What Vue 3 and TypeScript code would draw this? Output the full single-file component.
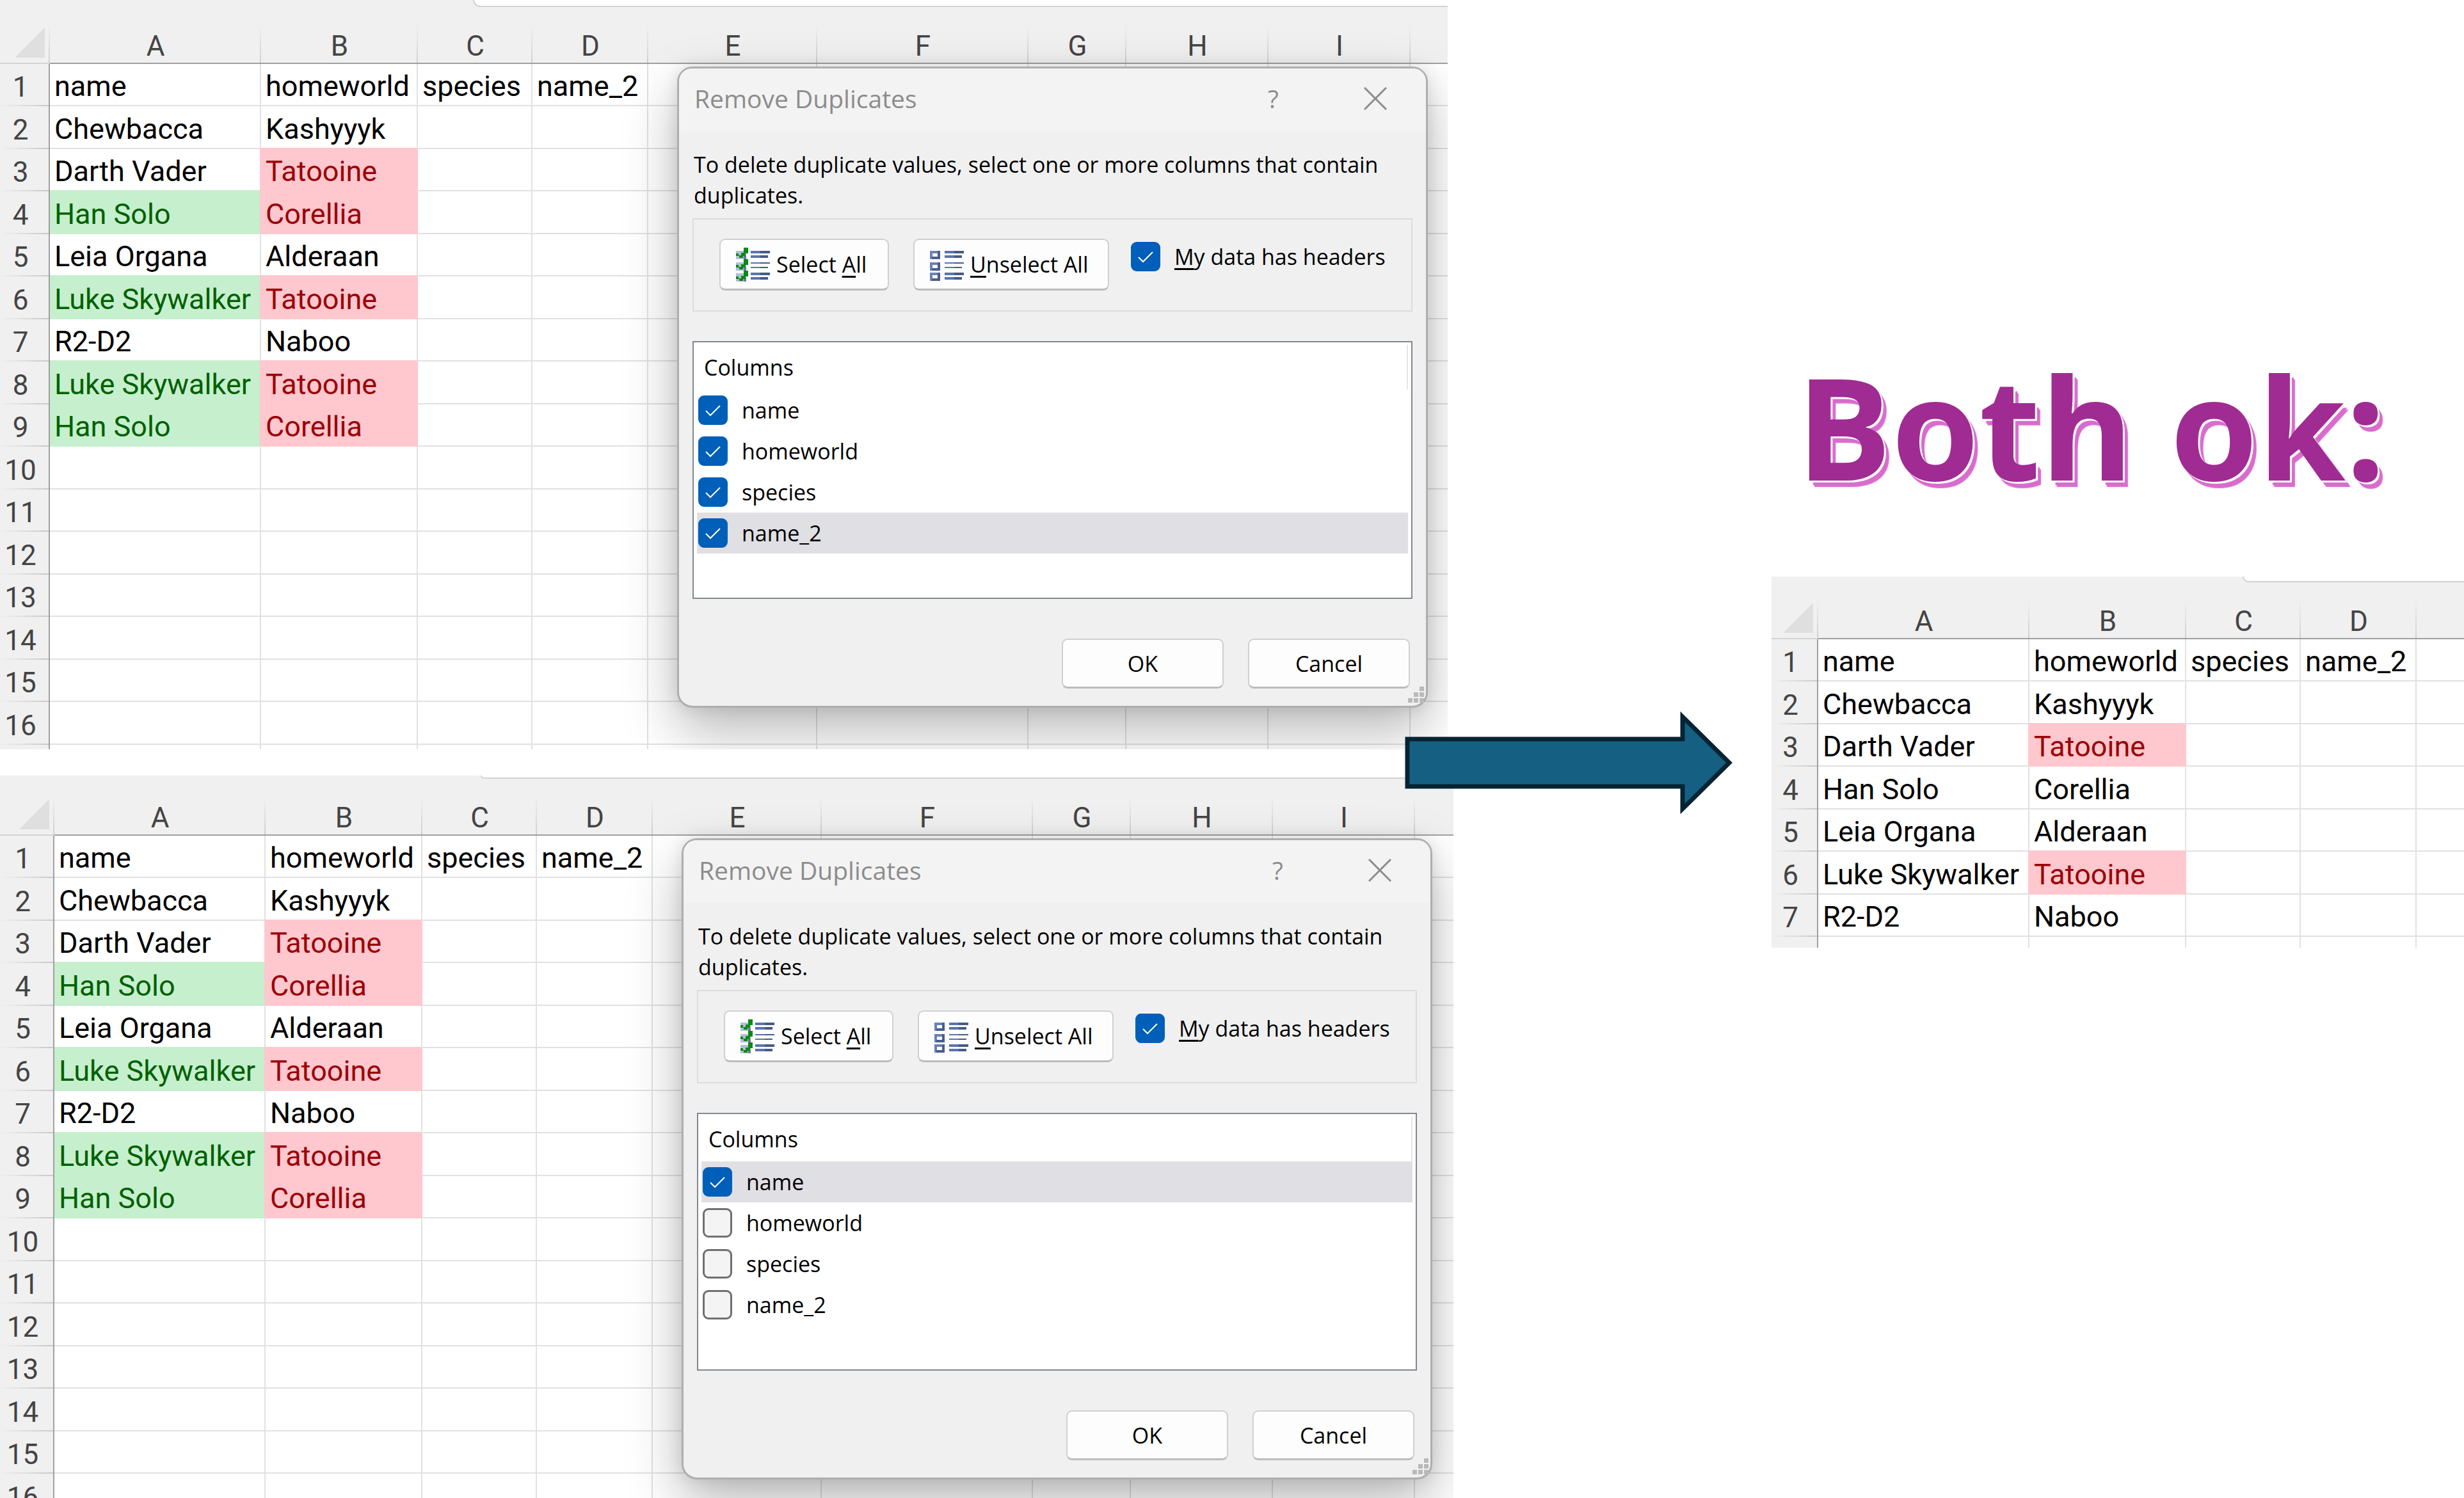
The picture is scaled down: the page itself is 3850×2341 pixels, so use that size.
<script setup lang="ts">
import { reactive } from 'vue'

type Tone = 'plain' | 'green' | 'red'
interface Cell { text: string; tone: Tone }
interface Choice { label: string; checked: boolean; active: boolean }
interface Sheet {
  id: string
  gutter: number
  barTop: number
  barLeft: number
  cutRow: number
  letters: string[]
  widths: number[]
  rows: Cell[][]
  choices: Choice[]
  headers: boolean
}

const tones: Record<string, Tone> = { g: 'green', r: 'red' }

function row(source: string): Cell[] {
  return source.split('|').map((part) => {
    const [text, mark] = part.split('~')
    return { text, tone: tones[mark] ?? 'plain' }
  })
}

function build(lines: string[], rowCount: number, colCount: number): Cell[][] {
  return Array.from({ length: rowCount }, (_, r) => {
    const cells = lines[r] ? row(lines[r]) : []
    while (cells.length < colCount) cells.push({ text: '', tone: 'plain' })
    return cells
  })
}

function choices(checked: boolean[], active: number): Choice[] {
  return ['name', 'homeworld', 'species', 'name_2'].map((label, i) => ({
    label,
    checked: checked[i],
    active: i === active,
  }))
}

const before = [
  'name|homeworld|species|name_2',
  'Chewbacca|Kashyyyk',
  'Darth Vader|Tatooine~r',
  'Han Solo~g|Corellia~r',
  'Leia Organa|Alderaan',
  'Luke Skywalker~g|Tatooine~r',
  'R2-D2|Naboo',
  'Luke Skywalker~g|Tatooine~r',
  'Han Solo~g|Corellia~r',
]
const after = [
  'name|homeworld|species|name_2',
  'Chewbacca|Kashyyyk',
  'Darth Vader|Tatooine~r',
  'Han Solo|Corellia',
  'Leia Organa|Alderaan',
  'Luke Skywalker|Tatooine~r',
  'R2-D2|Naboo',
]
const wide = ['A', 'B', 'C', 'D', 'E', 'F', 'G', 'H', 'I', '']
const wideWidths = [330, 245, 179, 181, 264, 330, 153, 222, 222]

const sheets = reactive<Sheet[]>([
  {
    id: 'all', gutter: 78, barTop: 11, barLeft: 739, cutRow: 7, letters: wide, widths: wideWidths,
    rows: build(before, 16, 10), choices: choices([true, true, true, true], 3), headers: true,
  },
  {
    id: 'one', gutter: 85, barTop: 5, barLeft: 751, cutRow: 0, letters: wide, widths: wideWidths,
    rows: build(before, 16, 10), choices: choices([true, false, false, false], 0), headers: true,
  },
  {
    id: 'result', gutter: 73, barTop: 9, barLeft: 736, cutRow: 17, letters: ['A', 'B', 'C', 'D', ''],
    widths: [330, 245, 179, 181],
    rows: build(after, 7, 5), choices: [], headers: false,
  },
])
</script>

<template>
  <main class="page">
    <section
      v-for="sheet in sheets"
      :key="sheet.id"
      class="sheet"
      :class="sheet.id"
      :style="{ '--gutter': sheet.gutter + 'px' }"
    >
      <h1 v-if="sheet.id === 'result'" class="verdict">Both ok:</h1>
      <div class="window">
        <div class="strip" :style="{ height: sheet.barTop + 'px', paddingLeft: sheet.barLeft + 'px' }">
          <div class="formula"></div>
        </div>
        <div class="body">
          <table class="grid">
            <colgroup>
              <col :style="{ width: sheet.gutter + 'px' }" />
              <col v-for="(w, i) in sheet.widths" :key="i" :style="{ width: w + 'px' }" />
              <col />
            </colgroup>
            <thead>
              <tr>
                <td class="corner">
                  <svg width="47" height="47" viewBox="0 0 47 47" aria-hidden="true"><path d="M47 0V47H0Z" fill="#dfdfdf" /></svg>
                </td>
                <th v-for="(letter, i) in sheet.letters" :key="i" scope="col">{{ letter }}</th>
              </tr>
            </thead>
            <tbody>
              <tr v-for="(cells, r) in sheet.rows" :key="r">
                <th scope="row">{{ r + 1 }}</th>
                <td v-for="(cell, c) in cells" :key="c" :class="cell.tone">{{ cell.text }}</td>
              </tr>
              <tr v-if="sheet.cutRow" class="cut" :style="{ height: sheet.cutRow + 'px' }">
                <th></th>
                <td v-for="(letter, i) in sheet.letters" :key="i"></td>
              </tr>
            </tbody>
          </table>

          <form v-if="sheet.choices.length" class="dialog" role="dialog" aria-label="Remove Duplicates" @submit.prevent>
            <header class="titlebar">
              <h2>Remove Duplicates</h2>
              <button type="button" class="chrome" aria-label="Help">?</button>
              <button type="button" class="chrome" aria-label="Close">
                <svg width="36" height="36" viewBox="0 0 36 36" aria-hidden="true"><path d="M1 1L35 35M35 1L1 35" fill="none" stroke="#8c8c8c" stroke-width="3" /></svg>
              </button>
            </header>
            <div class="content">
              <p>To delete duplicate values, select one or more columns that contain duplicates.</p>
              <div class="group">
                <button type="button" class="push select">
                  <svg width="53" height="53" viewBox="0 0 53 53" aria-hidden="true">
                    <g fill="#b3bedb"><path d="M0 5h16v13H0zM0 23h16v13H0zM0 40h16v13H0z" /></g>
                    <g fill="#66799f"><path d="M12 13h4v5h-4zM12 31h4v5h-4zM12 48h4v5h-4z" /></g>
                    <g fill="#0a8a14">
                      <path d="M12 0h7v9h-4v4h-4v3H5v-3H0V9h4v3h4V8h4z" />
                      <path d="M12 18h7v9h-4v4h-4v3H5v-3H0v-4h4v3h4v-4h4z" />
                      <path d="M12 36h7v9h-4v4h-4v3H5v-3H0v-4h4v3h4v-4h4z" />
                    </g>
                    <g fill="#5a74b0"><path d="M23 5h15v4H23zM23 12h15v4H23zM23 23h15v2H23zM23 30h15v2H23zM23 39h15v4H23zM23 46h15v4H23z" /></g>
                    <g fill="#475b82"><path d="M38 5h15v4H38zM38 12h12v4H38zM38 23h15v2H38zM38 30h12v2H38zM38 39h15v4H38zM38 46h12v4H38z" /></g>
                  </svg>
                  <span>Select <u>A</u>ll</span>
                </button>
                <button type="button" class="push unselect">
                  <svg width="53" height="53" viewBox="0 0 53 53" aria-hidden="true">
                    <g fill="#fff" stroke="#6a80b8" stroke-width="4"><path d="M2 7h12v9H2zM2 25h12v9H2zM2 41h12v9H2z" /></g>
                    <g fill="none" stroke="#4a5e88" stroke-width="4"><path d="M14 5v11H3M14 23v11H3M14 39v11H3" /></g>
                    <g fill="#5a74b0"><path d="M23 5h15v4H23zM23 12h15v4H23zM23 23h15v2H23zM23 30h15v2H23zM23 39h15v4H23zM23 46h15v4H23z" /></g>
                    <g fill="#475b82"><path d="M38 5h15v4H38zM38 12h12v4H38zM38 23h15v2H38zM38 30h12v2H38zM38 39h15v4H38zM38 46h12v4H38z" /></g>
                  </svg>
                  <span><u>U</u>nselect All</span>
                </button>
                <label class="check">
                  <span class="box">
                    <input v-model="sheet.headers" type="checkbox" />
                    <svg v-if="sheet.headers" width="46" height="46" viewBox="0 0 46 46" aria-hidden="true"><path d="M12 24L19 31L34 16" /></svg>
                  </span>
                  <span><u>M</u>y data has headers</span>
                </label>
              </div>
              <div class="list">
                <div class="listhead">Columns</div>
                <label v-for="choice in sheet.choices" :key="choice.label" class="check item" :class="{ active: choice.active }">
                  <span class="box">
                    <input v-model="choice.checked" type="checkbox" />
                    <svg v-if="choice.checked" width="46" height="46" viewBox="0 0 46 46" aria-hidden="true"><path d="M12 24L19 31L34 16" /></svg>
                  </span>
                  <span>{{ choice.label }}</span>
                </label>
              </div>
              <footer class="actions">
                <button type="submit" class="push answer">OK</button>
                <button type="button" class="push answer">Cancel</button>
              </footer>
            </div>
            <svg class="grip" width="25" height="25" viewBox="0 0 25 25" aria-hidden="true">
              <path d="M18 0h7v7h-7zM9 9h7v7H9zM18 9h7v7h-7zM0 18h7v7H0zM9 18h7v7H9zM18 18h7v7h-7z" fill="#b9b9b9" />
            </svg>
          </form>
        </div>
      </div>
    </section>

    <svg class="arrow" width="512" height="162" viewBox="0 0 512 162" role="img" aria-label="leads to">
      <path d="M4 44H434V9L507 81L434 153V118H4Z" fill="#156082" stroke="#042433" stroke-width="7" />
    </svg>
  </main>
</template>

<style>
body {
  margin: 0;
  background: #fff;
}
</style>

<style scoped>
.page {
  position: relative;
  display: grid;
  grid-template-columns: minmax(0, 2271fr) minmax(0, 497fr) minmax(0, 1082fr);
  grid-template-rows: auto minmax(0, 1fr);
  row-gap: 41px;
  height: 100vh;
  overflow: hidden;
  font-family: Roboto, "Liberation Sans", sans-serif;
}
.sheet {
  min-width: 0;
  min-height: 0;
}
.all {
  grid-area: 1 / 1;
  margin-right: 9px;
}
.one {
  grid-area: 2 / 1;
}
.result {
  grid-area: 1 / 3 / 3 / 4;
}
.window {
  overflow: hidden;
  background: #f0f0f0;
}
.one .window {
  height: 100%;
}
.strip {
  box-sizing: border-box;
}
.formula {
  box-sizing: border-box;
  height: 100%;
  background: #fff;
  border-left: 2px solid #d2d2d2;
  border-bottom: 2px solid #d2d2d2;
  border-bottom-left-radius: 14px;
}
.body {
  position: relative;
}
.verdict {
  margin: 0;
  padding: 554px 0 123px 39px;
  font-family: "Open Sans", "Noto Sans", sans-serif;
  font-weight: 700;
  font-size: 221px;
  line-height: 224px;
  white-space: nowrap;
  color: #a02b93;
  text-shadow: 1px 1px 0 #fff, 3px 3px 0 #fff, 6px 7px 1px #d86dcd, 8px 10px 1px #d86dcd;
}

.grid {
  width: 100%;
  table-layout: fixed;
  border-collapse: separate;
  border-spacing: 0;
  font-size: 44px;
  line-height: 44px;
}
.grid th,
.grid td {
  box-sizing: border-box;
  padding: 0 0 7px 7px;
  vertical-align: bottom;
  white-space: nowrap;
  font-weight: 400;
}
.grid thead tr {
  height: 89px;
}
.grid thead th,
.grid thead td {
  padding: 0 0 4px;
  color: #444;
  text-align: center;
  border-bottom: 2px solid #a0a0a0;
  background: linear-gradient(to top, #cfcfcf, #f0f0f0) right bottom / 2px 60px no-repeat #f0f0f0;
}
.grid thead th:last-child {
  background: #f0f0f0;
}
.grid thead .corner {
  padding: 0 8px 8px 0;
  text-align: right;
  line-height: 0;
  border-bottom-color: #d4d4d4;
}
.grid tbody tr {
  height: 66px;
}
.grid tbody tr:nth-child(even) {
  height: 67px;
}
.grid tbody td {
  background: #fff;
  color: #000;
  font-size: 45px;
  border-right: 2px solid #e1e1e1;
  border-bottom: 2px solid #e1e1e1;
}
.grid tbody td:last-child {
  border-right: 0;
}
.grid tbody th {
  padding: 0 12px 8px 0;
  color: #444;
  text-align: center;
  border-right: 2px solid #a0a0a0;
  background: linear-gradient(to left, #c8c8c8, #f0f0f0) left bottom / 100% 2px no-repeat #f0f0f0;
}
.grid tbody td.green {
  color: #006100;
  background: #c6efce;
  border-color: #c6efce;
  box-shadow: 0 -2px 0 #c6efce;
}
.grid tbody td.red {
  color: #9c0006;
  background: #ffc7ce;
  border-color: #ffc7ce;
  box-shadow: -2px -2px 0 #ffc7ce;
}
.grid .cut th,
.grid .cut td {
  padding: 0;
  border-bottom: 0;
}
.grid .cut th {
  background: #f0f0f0;
}

.dialog {
  position: absolute;
  top: 93px;
  left: calc(var(--gutter) + 980px);
  box-sizing: border-box;
  width: 1173px;
  border: 3px solid #aeaeae;
  border-radius: 24px;
  background: #f0f0f0;
  box-shadow: 0 0 24px rgba(0, 0, 0, 0.1), 0 36px 84px rgba(0, 0, 0, 0.28);
  font-family: "Open Sans", "Noto Sans", sans-serif;
  font-size: 34px;
  line-height: 48px;
  color: #000;
}
.titlebar {
  display: flex;
  align-items: center;
  height: 94px;
  padding: 0 0 4px 24px;
  border-radius: 20px 20px 0 0;
  background: #f3f3f3;
}
.titlebar h2 {
  flex: 1;
  margin: 0;
  font-size: 39px;
  font-weight: 400;
  color: #8c8c8c;
}
.chrome {
  display: flex;
  align-items: center;
  justify-content: center;
  width: 159px;
  height: 94px;
  padding: 0;
  border: 0;
  background: none;
  font: inherit;
  font-size: 39px;
  color: #8c8c8c;
}
.content {
  padding: 28px 21px 27px;
}
.content p {
  margin: 0 0 12px;
  padding-left: 2px;
}
.group {
  display: flex;
  align-items: flex-start;
  box-sizing: border-box;
  height: 146px;
  padding: 30px 0 0 40px;
  border: 2px solid #dcdcdc;
}
.push {
  display: flex;
  align-items: center;
  justify-content: center;
  box-sizing: border-box;
  height: 81px;
  padding: 0;
  border: 2px solid #d0d0d0;
  border-bottom: 3px solid #bcbcbc;
  border-radius: 9px;
  background: #fdfdfd;
  font: inherit;
  color: #000;
  white-space: nowrap;
}
.select,
.unselect {
  justify-content: flex-start;
  gap: 10px;
  margin-right: 38px;
  padding-left: 24px;
}
.select {
  width: 265px;
}
.unselect {
  width: 306px;
  margin-right: 34px;
}
u {
  text-decoration-thickness: 3px;
  text-underline-offset: 5px;
  text-decoration-skip-ink: none;
}
.check {
  display: flex;
  align-items: center;
  gap: 22px;
  white-space: nowrap;
}
.group .check {
  margin-top: 4px;
}
.box {
  display: grid;
  width: 46px;
  height: 46px;
}
.box input,
.box svg {
  grid-area: 1 / 1;
}
.box input {
  appearance: none;
  box-sizing: border-box;
  width: 46px;
  height: 46px;
  margin: 0;
  border: 3px solid #707070;
  border-radius: 9px;
  background: #f4f4f4;
}
.box input:checked {
  border-color: #005fb8;
  background: #005fb8;
}
.box svg {
  pointer-events: none;
  fill: none;
  stroke: #fff;
  stroke-width: 2;
}
.list {
  box-sizing: border-box;
  height: 403px;
  margin-top: 46px;
  padding: 4px 5px 0;
  border: 2px solid #828790;
  background: #fff;
}
.listhead {
  height: 70px;
  padding-left: 11px;
  line-height: 70px;
  border-right: 2px solid #e5e5e5;
}
.item {
  height: 64px;
  padding-left: 2px;
}
.item.active {
  background: #e0dfe4;
}
.actions {
  display: flex;
  justify-content: flex-end;
  gap: 38px;
  margin-top: 62px;
  padding-right: 4px;
}
.answer {
  width: 253px;
  height: 78px;
}
.grip {
  position: absolute;
  right: 3px;
  bottom: 5px;
}
.arrow {
  position: absolute;
  top: 1111px;
  left: 57%;
}
</style>
